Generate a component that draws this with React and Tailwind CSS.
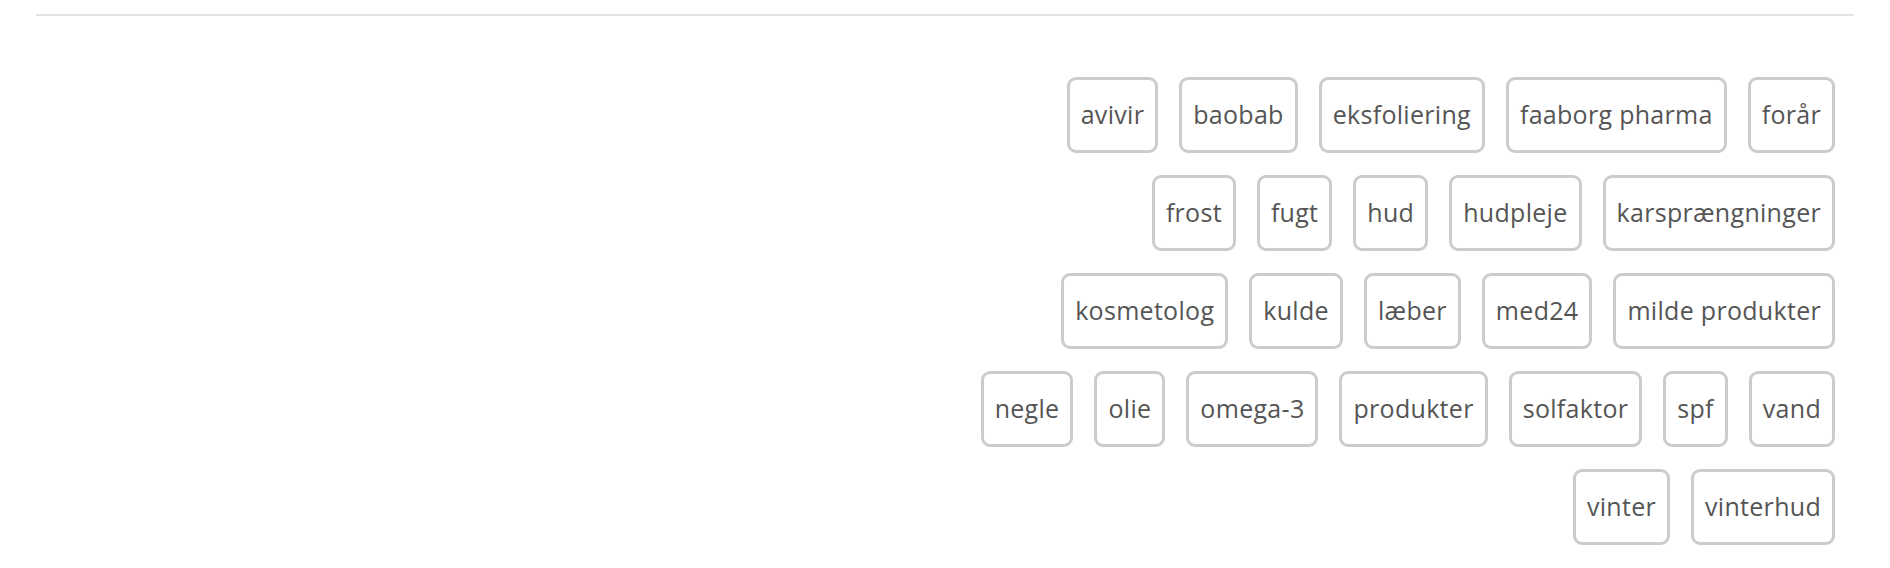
const rows = [
  ["avivir", "baobab", "eksfoliering", "faaborg pharma", "forår"],
  ["frost", "fugt", "hud", "hudpleje", "karsprængninger"],
  ["kosmetolog", "kulde", "læber", "med24", "milde produkter"],
  ["negle", "olie", "omega-3", "produkter", "solfaktor", "spf", "vand"],
  ["vinter", "vinterhud"],
];

const Tag = ({ label }) => (
  <a
    href="#"
    className="flex h-[76px] items-center rounded-[9px] border-[3px] border-[#cccccc] bg-white px-[11px] text-[25px] tracking-[0.3px] text-[#555555]"
  >
    {label}
  </a>
);

export default function App() {
  return (
    <div
      className="min-h-[568px] bg-white px-[36px] pt-[14px]"
      style={{ fontFamily: '"Open Sans", "Noto Sans", sans-serif' }}
    >
      <hr className="border-0 border-t-2 border-[#e4e4e4]" />

      <div className="mt-[61px] flex flex-col items-end gap-y-[22px] pr-[19px]">
        {rows.map((row, i) => (
          <div key={i} className="flex gap-x-[21px]">
            {row.map((tag) => (
              <Tag key={tag} label={tag} />
            ))}
          </div>
        ))}
      </div>
    </div>
  );
}
